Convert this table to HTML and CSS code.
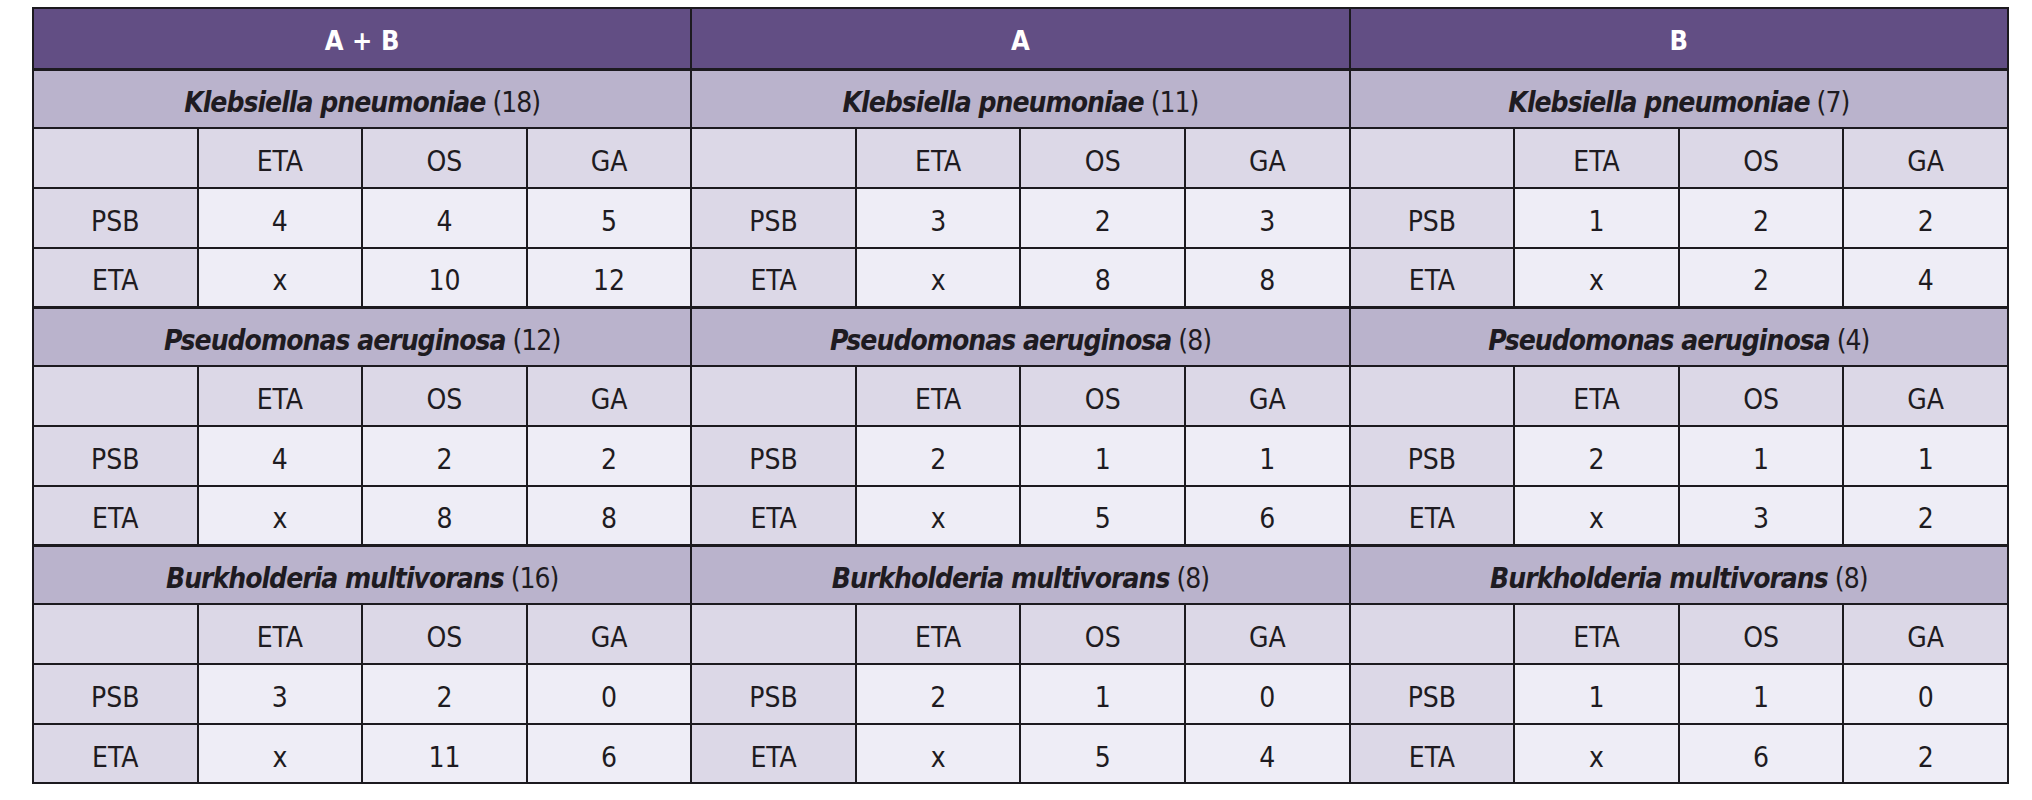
FILE: index.html
```html
<!DOCTYPE html>
<html>
<head>
<meta charset="utf-8">
<link rel="stylesheet" href="styles.css">
</head>
<body>
<table class="grid">
  <tr class="top">
    <th colspan="4">A + B</th>
    <th colspan="4">A</th>
    <th colspan="4">B</th>
  </tr>

  <tr class="species">
    <td colspan="4"><i>Klebsiella pneumoniae</i> (18)</td>
    <td colspan="4"><i>Klebsiella pneumoniae</i> (11)</td>
    <td colspan="4"><i>Klebsiella pneumoniae</i> (7)</td>
  </tr>
  <tr class="cols">
    <td></td><td>ETA</td><td>OS</td><td>GA</td>
    <td></td><td>ETA</td><td>OS</td><td>GA</td>
    <td></td><td>ETA</td><td>OS</td><td>GA</td>
  </tr>
  <tr class="data r1">
    <td class="lab">PSB</td><td>4</td><td>4</td><td>5</td>
    <td class="lab">PSB</td><td>3</td><td>2</td><td>3</td>
    <td class="lab">PSB</td><td>1</td><td>2</td><td>2</td>
  </tr>
  <tr class="data r2">
    <td class="lab">ETA</td><td>x</td><td>10</td><td>12</td>
    <td class="lab">ETA</td><td>x</td><td>8</td><td>8</td>
    <td class="lab">ETA</td><td>x</td><td>2</td><td>4</td>
  </tr>

  <tr class="species">
    <td colspan="4"><i>Pseudomonas aeruginosa</i> (12)</td>
    <td colspan="4"><i>Pseudomonas aeruginosa</i> (8)</td>
    <td colspan="4"><i>Pseudomonas aeruginosa</i> (4)</td>
  </tr>
  <tr class="cols">
    <td></td><td>ETA</td><td>OS</td><td>GA</td>
    <td></td><td>ETA</td><td>OS</td><td>GA</td>
    <td></td><td>ETA</td><td>OS</td><td>GA</td>
  </tr>
  <tr class="data r1">
    <td class="lab">PSB</td><td>4</td><td>2</td><td>2</td>
    <td class="lab">PSB</td><td>2</td><td>1</td><td>1</td>
    <td class="lab">PSB</td><td>2</td><td>1</td><td>1</td>
  </tr>
  <tr class="data r2">
    <td class="lab">ETA</td><td>x</td><td>8</td><td>8</td>
    <td class="lab">ETA</td><td>x</td><td>5</td><td>6</td>
    <td class="lab">ETA</td><td>x</td><td>3</td><td>2</td>
  </tr>

  <tr class="species">
    <td colspan="4"><i>Burkholderia multivorans</i> (16)</td>
    <td colspan="4"><i>Burkholderia multivorans</i> (8)</td>
    <td colspan="4"><i>Burkholderia multivorans</i> (8)</td>
  </tr>
  <tr class="cols">
    <td></td><td>ETA</td><td>OS</td><td>GA</td>
    <td></td><td>ETA</td><td>OS</td><td>GA</td>
    <td></td><td>ETA</td><td>OS</td><td>GA</td>
  </tr>
  <tr class="data r1">
    <td class="lab">PSB</td><td>3</td><td>2</td><td>0</td>
    <td class="lab">PSB</td><td>2</td><td>1</td><td>0</td>
    <td class="lab">PSB</td><td>1</td><td>1</td><td>0</td>
  </tr>
  <tr class="data r2">
    <td class="lab">ETA</td><td>x</td><td>11</td><td>6</td>
    <td class="lab">ETA</td><td>x</td><td>5</td><td>4</td>
    <td class="lab">ETA</td><td>x</td><td>6</td><td>2</td>
  </tr>
</table>
</body>
</html>
```

FILE: styles.css
```css
html, body {
  margin: 0;
  padding: 0;
  background: #ffffff;
}

body {
  padding: 7px 0 0 32px;
  font-family: "DejaVu Sans Condensed", "Liberation Sans", sans-serif;
  color: #1e1b21;
}

.grid {
  border-collapse: collapse;
  table-layout: fixed;
  width: 1977px;
  font-size: 28px;
  line-height: 1;
}

.grid th,
.grid td {
  border: 2px solid #1c1a1f;
  text-align: center;
  vertical-align: middle;
  padding: 8px 0 0 0;
  width: 164px;
  box-sizing: border-box;
}

.top th {
  height: 61px;
  padding-top: 5px;
  background: #624e84;
  color: #ffffff;
  font-weight: bold;
  font-size: 27px;
}

.species td {
  height: 59px;
  background: #bab3cc;
  border-top-width: 3px;
  letter-spacing: -1px;
}

.species i {
  font-weight: bold;
}

.cols td {
  height: 60px;
  background: #dcd8e7;
}

.data td {
  background: #eeedf6;
}

.data td.lab {
  background: #dcd8e7;
}

.r1 td {
  height: 60px;
}

.r2 td {
  height: 59px;
}
```
